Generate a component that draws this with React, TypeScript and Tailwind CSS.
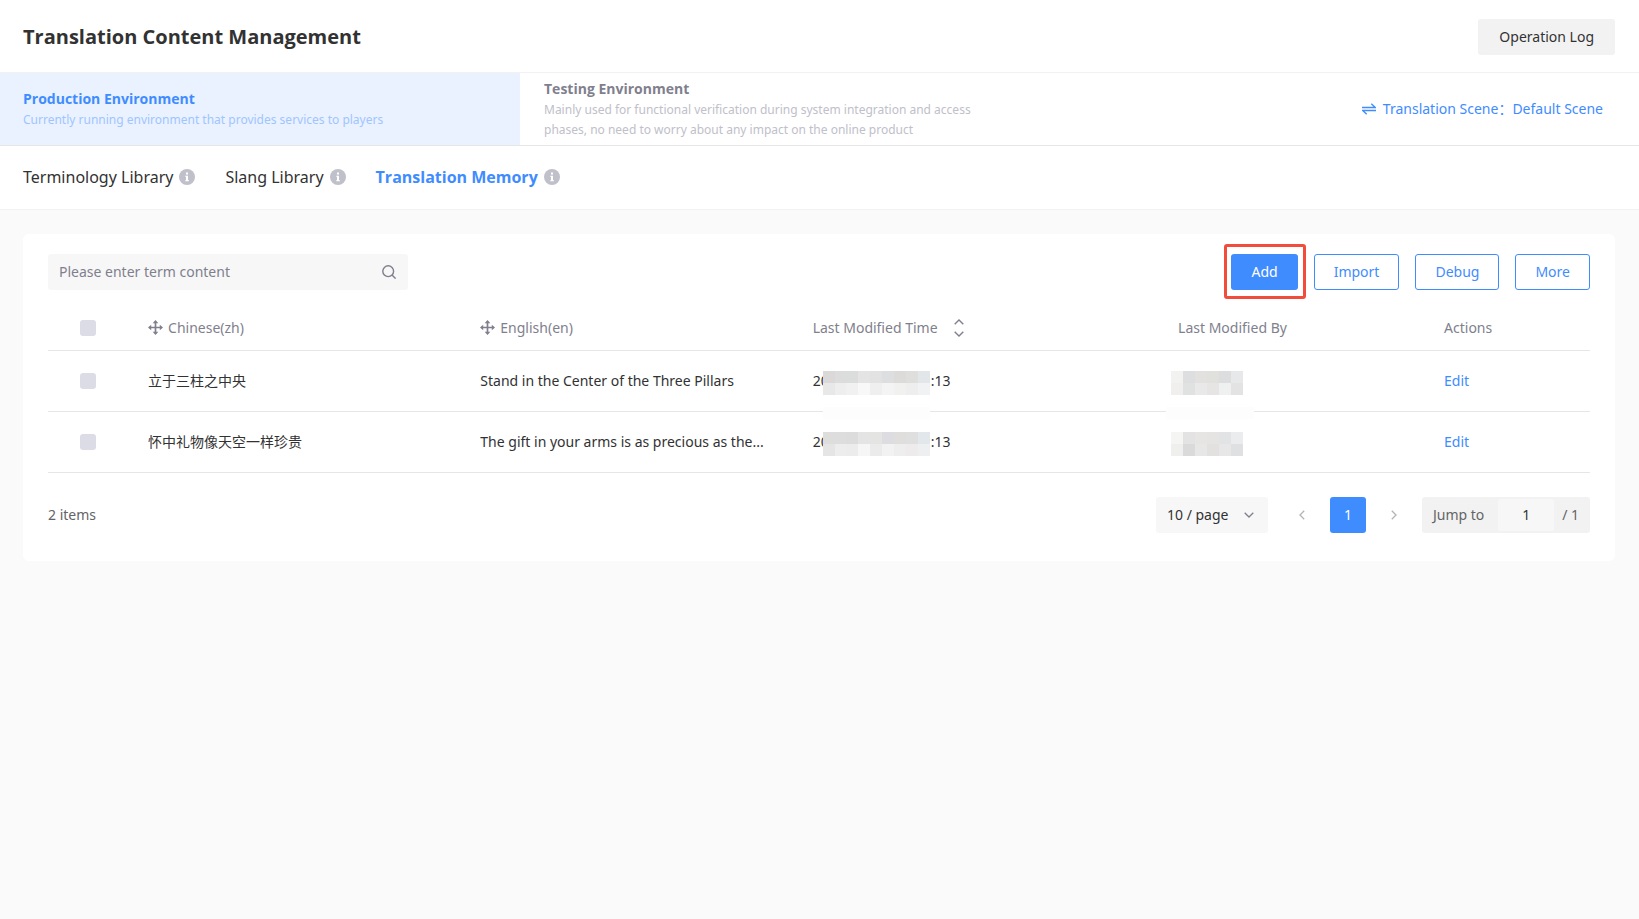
import React, { useState } from 'react';

interface TermRow {
  id: number;
  zh: string;
  en: string;
  timeStart: string;
  timeEnd: string;
  timeMask: string[];
  userMask: string[];
}

const rows: TermRow[] = [
  {
    id: 1,
    zh: '立于三柱之中央',
    en: 'Stand in the Center of the Three Pillars',
    timeStart: '20',
    timeEnd: ':13',
    timeMask: [
      '#dad9d8', '#dcdcdc', '#dbdcdc', '#e4e4e4', '#e2e2e2', '#dddee0', '#dcdbd9', '#dededd', '#e2e6e9',
      '#e9e8e9', '#eeeeef', '#f1f1f1', '#f8f8f8', '#efeff0', '#f4f4f4', '#f1f1ef', '#eeeeef', '#f1f2f4',
    ],
    userMask: [
      '#f2f2f1', '#dcdee0', '#e2e1e0', '#e0e0dc', '#dcddde', '#e7e8ea',
      '#f0efee', '#dfe2e1', '#e9e9ea', '#e6e5e3', '#eff1f1', '#e3e3e4',
    ],
  },
  {
    id: 2,
    zh: '怀中礼物像天空一样珍贵',
    en: 'The gift in your arms is as precious as the...',
    timeStart: '20',
    timeEnd: ':13',
    timeMask: [
      '#dddddc', '#dddddd', '#dcdcdd', '#e4e4e4', '#e4e4e3', '#dddde1', '#dfdedd', '#dfdfdf', '#e2e7eb',
      '#e5e5e5', '#ecedec', '#ececec', '#f6f6f6', '#ebebec', '#f2f2f2', '#eeeeee', '#edebec', '#eeeff1',
    ],
    userMask: [
      '#f5f5f4', '#e3e3e4', '#e6e5e4', '#e5e4e3', '#e1e3e5', '#ebecee',
      '#efefee', '#dadada', '#e7e7e7', '#e2e1df', '#e7e7e7', '#dfe0e2',
    ],
  },
];

const InfoIcon = () => (
  <svg className="size-4 shrink-0" viewBox="0 0 16 16" aria-hidden="true">
    <circle cx="8" cy="8" r="8" fill="#c0c0ca" />
    <path d="M7 3.5h2v2H7zM6.2 6.8H9v4.4h1v1H6.2v-1H7V7.8h-.8z" fill="#fff" />
  </svg>
);

const MoveIcon = () => (
  <svg className="size-[15px] shrink-0" viewBox="0 0 15 15" aria-hidden="true">
    <path d="M7.5 1.5v12M1.5 7.5h12" stroke="currentColor" strokeWidth="1.7" />
    <path d="M7.5 0L10.3 3.2H4.7zM7.5 15L4.7 11.8h5.6zM0 7.5L3.2 4.7v5.6zM15 7.5L11.8 10.3V4.7z" fill="currentColor" />
  </svg>
);

const SortIcon = () => (
  <svg className="h-[18px] w-[10px]" viewBox="0 0 10 18" fill="none" stroke="currentColor" strokeWidth="1.4" aria-hidden="true">
    <path d="M.7 5.2L5 1l4.3 4.2M.7 12.8L5 17l4.3-4.2" />
  </svg>
);

const SwapIcon = () => (
  <svg className="h-3 w-[14px]" viewBox="0 0 14 12" fill="none" stroke="currentColor" strokeWidth="1.3" aria-hidden="true">
    <path d="M0 4.5h13.2L9.3.8M14 7.5H.8l3.9 3.7" />
  </svg>
);

const SearchIcon = () => (
  <svg className="size-[14px]" viewBox="0 0 14 14" fill="none" stroke="currentColor" strokeWidth="1.4" aria-hidden="true">
    <circle cx="6.2" cy="6.2" r="5.4" />
    <path d="M10 10l3.6 3.6" />
  </svg>
);

const Mosaic: React.FC<{ colors: string[]; className: string }> = ({ colors, className }) => (
  <div className={`absolute grid h-6 ${className}`} aria-hidden="true">
    {colors.map((color, i) => (
      <span key={i} style={{ backgroundColor: color }} />
    ))}
  </div>
);

const checkboxClass = 'block size-4 appearance-none rounded-[3px] bg-[#dcdce6] checked:bg-[#3f8cff]';
const outlineButton = 'h-9 rounded-[3px] border border-[#3f8cff] bg-white px-[19px] text-[#3f8cff]';
const boldFont = "font-['Open_Sans','Noto_Sans_CJK_SC',sans-serif] font-bold";

const tabs = ['Terminology Library', 'Slang Library', 'Translation Memory'];

const App: React.FC = () => {
  const [activeTab, setActiveTab] = useState('Translation Memory');
  const [keyword, setKeyword] = useState('');
  const [jumpPage, setJumpPage] = useState('1');

  return (
    <div className="min-h-screen bg-[#fafafa] font-['Noto_Sans','Noto_Sans_CJK_SC',sans-serif] text-sm leading-5 text-[#323233]">
      <header className="flex h-[73px] items-center justify-between border-b border-[#f2f2f2] bg-white pt-0.5 pr-6 pl-[23px]">
        <h1 className={`text-xl ${boldFont}`}>Translation Content Management</h1>
        <button className="h-9 rounded-[3px] bg-[#f2f2f2] px-[21px]">Operation Log</button>
      </header>

      <section className="flex h-[73px] items-stretch border-b border-[#e6e6e6] bg-white">
        <button className="w-[520px] bg-[#eaf2ff] px-[23px] text-left">
          <span className={`block text-[#3f8cff] ${boldFont}`}>Production Environment</span>
          <span className="block pt-px text-xs leading-5 text-[#9fc5ff]">Currently running environment that provides services to players</span>
        </button>
        <button className="w-[520px] px-6 text-left">
          <span className={`block text-[#7f7f8e] ${boldFont}`}>Testing Environment</span>
          <span className="block pt-px text-xs leading-5 text-[#c0c0ca]">
            Mainly used for functional verification during system integration and access phases, no need to worry about any impact on the online product
          </span>
        </button>
        <a href="#scene" className="mr-9 ml-auto flex items-center gap-[7px] text-[#3f8cff]">
          <SwapIcon />
          <span>Translation Scene：Default Scene</span>
        </a>
      </section>

      <nav className="flex h-16 items-center gap-[30px] border-b border-[#f2f2f2] bg-white px-[23px] pb-0.5 text-base">
        {tabs.map((tab) => (
          <button key={tab} onClick={() => setActiveTab(tab)} className="flex items-center gap-1.5">
            <span className={tab === activeTab ? `text-[#3f8cff] ${boldFont}` : ''}>{tab}</span>
            <InfoIcon />
          </button>
        ))}
      </nav>

      <main className="mt-6 mr-6 ml-[23px] rounded-md bg-white px-[25px] pt-5 pb-7">
        <div className="flex items-center justify-between">
          <label className="flex h-9 w-[360px] items-center rounded-[3px] bg-[#f7f7f7] pr-3 pl-[11px] text-[#7f7f8e]">
            <input
              value={keyword}
              onChange={(e) => setKeyword(e.target.value)}
              aria-label="Term content"
              placeholder="Please enter term content"
              className="min-w-0 flex-1 bg-transparent outline-none placeholder:text-[#7f7f8e]"
            />
            <SearchIcon />
          </label>
          <div className="flex gap-4">
            <div className="relative">
              <button className="h-9 rounded-[3px] bg-[#3f8cff] px-5 text-white">Add</button>
              <span className="pointer-events-none absolute -top-[10px] -right-2 -bottom-[9px] -left-[7px] rounded-[3px] border-3 border-[#f24c3d]" />
            </div>
            <button className={outlineButton}>Import</button>
            <button className={outlineButton}>Debug</button>
            <button className={outlineButton}>More</button>
          </div>
        </div>

        <table className="mt-4 w-full table-fixed text-left">
          <colgroup>
            <col className="w-[5.45%]" />
            <col className="w-[21.55%]" />
            <col className="w-[21.55%]" />
            <col className="w-[23.7%]" />
            <col className="w-[17.25%]" />
            <col className="w-[10.5%]" />
          </colgroup>
          <thead>
            <tr className="h-11 border-b border-[#e6e6e6] text-[#7f7f8e]">
              <th className="pl-8"><input type="checkbox" aria-label="Select all" className={checkboxClass} /></th>
              <th className="px-4 font-normal"><span className="flex items-center gap-[5px]"><MoveIcon />Chinese(zh)</span></th>
              <th className="px-4 font-normal"><span className="flex items-center gap-[5px]"><MoveIcon />English(en)</span></th>
              <th className="px-4 font-normal">
                <button className="flex items-center gap-4">Last Modified Time<SortIcon /></button>
              </th>
              <th className="px-4 font-normal">Last Modified By</th>
              <th className="px-4 font-normal">Actions</th>
            </tr>
          </thead>
          <tbody>
            {rows.map((row, i) => (
              <tr key={row.id} className="h-[61px] border-b border-[#e6e6e6]">
                <td className="pl-8"><input type="checkbox" aria-label={`Select ${row.zh}`} className={checkboxClass} /></td>
                <td className="truncate px-4">{row.zh}</td>
                <td className="truncate px-4">{row.en}</td>
                <td className="relative px-4">
                  <span className="inline-flex w-[138px] justify-between"><span>{row.timeStart}</span><span>{row.timeEnd}</span></span>
                  <Mosaic colors={row.timeMask} className="top-5 left-[26px] w-[107px] grid-cols-9" />
                  {i === 0 && <span className="absolute top-14 left-[26px] h-3 w-[107px] bg-[#fdfdfd]" />}
                </td>
                <td className="relative px-4">
                  <Mosaic colors={row.userMask} className="top-5 left-[9px] w-[72px] grid-cols-6" />
                  {i === 0 && <span className="absolute top-14 left-1 h-3 w-[88px] bg-[#fdfdfd]" />}
                </td>
                <td className="px-4"><a href="#edit" className="text-[#3f8cff]">Edit</a></td>
              </tr>
            ))}
          </tbody>
        </table>

        <footer className="mt-6 flex items-center text-[#646466]">
          <span className="mr-auto">2 items</span>
          <div className="relative text-[#323233]">
            <select aria-label="Page size" className="h-9 w-28 appearance-none rounded-[3px] bg-[#f7f7f7] px-[11px]">
              <option>10 / page</option>
            </select>
            <svg className="pointer-events-none absolute top-[15px] right-[14px] h-[6px] w-[10px] text-[#7f7f8e]" viewBox="0 0 10 6" fill="none" stroke="currentColor" strokeWidth="1.3">
              <path d="M.7.8L5 5 9.3.8" />
            </svg>
          </div>
          <div className="mx-[14px] flex items-center text-[#b4b4b8]">
            <button aria-label="Previous page" className="flex h-9 w-12 items-center justify-center pr-2">
              <svg className="h-[10px] w-[6px]" viewBox="0 0 6 10" fill="none" stroke="currentColor" strokeWidth="1.3"><path d="M5.2.7L1 5l4.2 4.3" /></svg>
            </button>
            <button className="size-9 rounded-[3px] bg-[#3f8cff] text-white">1</button>
            <button aria-label="Next page" className="flex h-9 w-[42px] items-center justify-center pl-[14px]">
              <svg className="h-[10px] w-[6px]" viewBox="0 0 6 10" fill="none" stroke="currentColor" strokeWidth="1.3"><path d="M.8.7L5 5 .8 9.3" /></svg>
            </button>
          </div>
          <label className="flex h-9 w-[168px] items-center rounded-[3px] bg-[#f2f2f2] pl-[11px]">
            Jump to
            <input
              value={jumpPage}
              onChange={(e) => setJumpPage(e.target.value)}
              className="mr-2 ml-auto h-8 w-14 rounded-[3px] bg-[#f7f7f7] text-center text-[#323233] outline-none"
            />
            <span className="mr-[11px]">/ 1</span>
          </label>
        </footer>
      </main>
    </div>
  );
};

export default App;
